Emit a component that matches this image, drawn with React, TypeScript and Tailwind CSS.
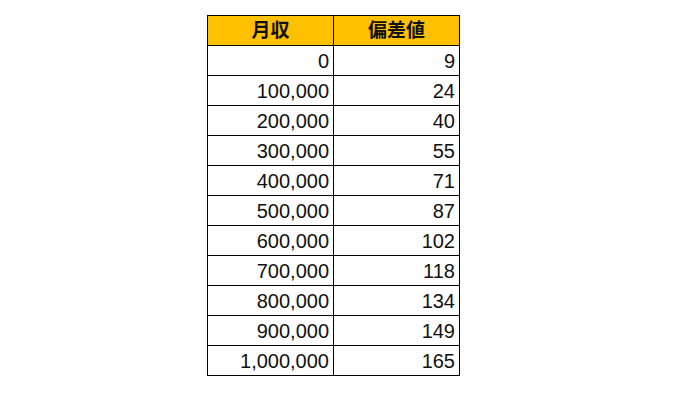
const rows: [string, string][] = [
  ["0", "9"],
  ["100,000", "24"],
  ["200,000", "40"],
  ["300,000", "55"],
  ["400,000", "71"],
  ["500,000", "87"],
  ["600,000", "102"],
  ["700,000", "118"],
  ["800,000", "134"],
  ["900,000", "149"],
  ["1,000,000", "165"],
];

export default function App() {
  return (
    <div className="w-[696px] h-[403px] bg-white pt-[15px] pl-[207px] font-['Liberation_Sans','Noto_Sans_CJK_JP',sans-serif] text-[#111]">
      <table className="border-collapse table-fixed w-[253px]">
        <thead>
          <tr className="bg-[#ffc000] h-[30px]">
            <th className="border border-black w-[126px] text-center text-[19px] font-bold leading-none">月収</th>
            <th className="border border-black text-center text-[19px] font-bold leading-none">偏差値</th>
          </tr>
        </thead>
        <tbody>
          {rows.map(([a, b]) => (
            <tr key={a} className="h-[30px]">
              <td className="border border-black text-right pr-[4px] text-[20px] leading-none">{a}</td>
              <td className="border border-black text-right pr-[4px] text-[20px] leading-none">{b}</td>
            </tr>
          ))}
        </tbody>
      </table>
    </div>
  );
}
